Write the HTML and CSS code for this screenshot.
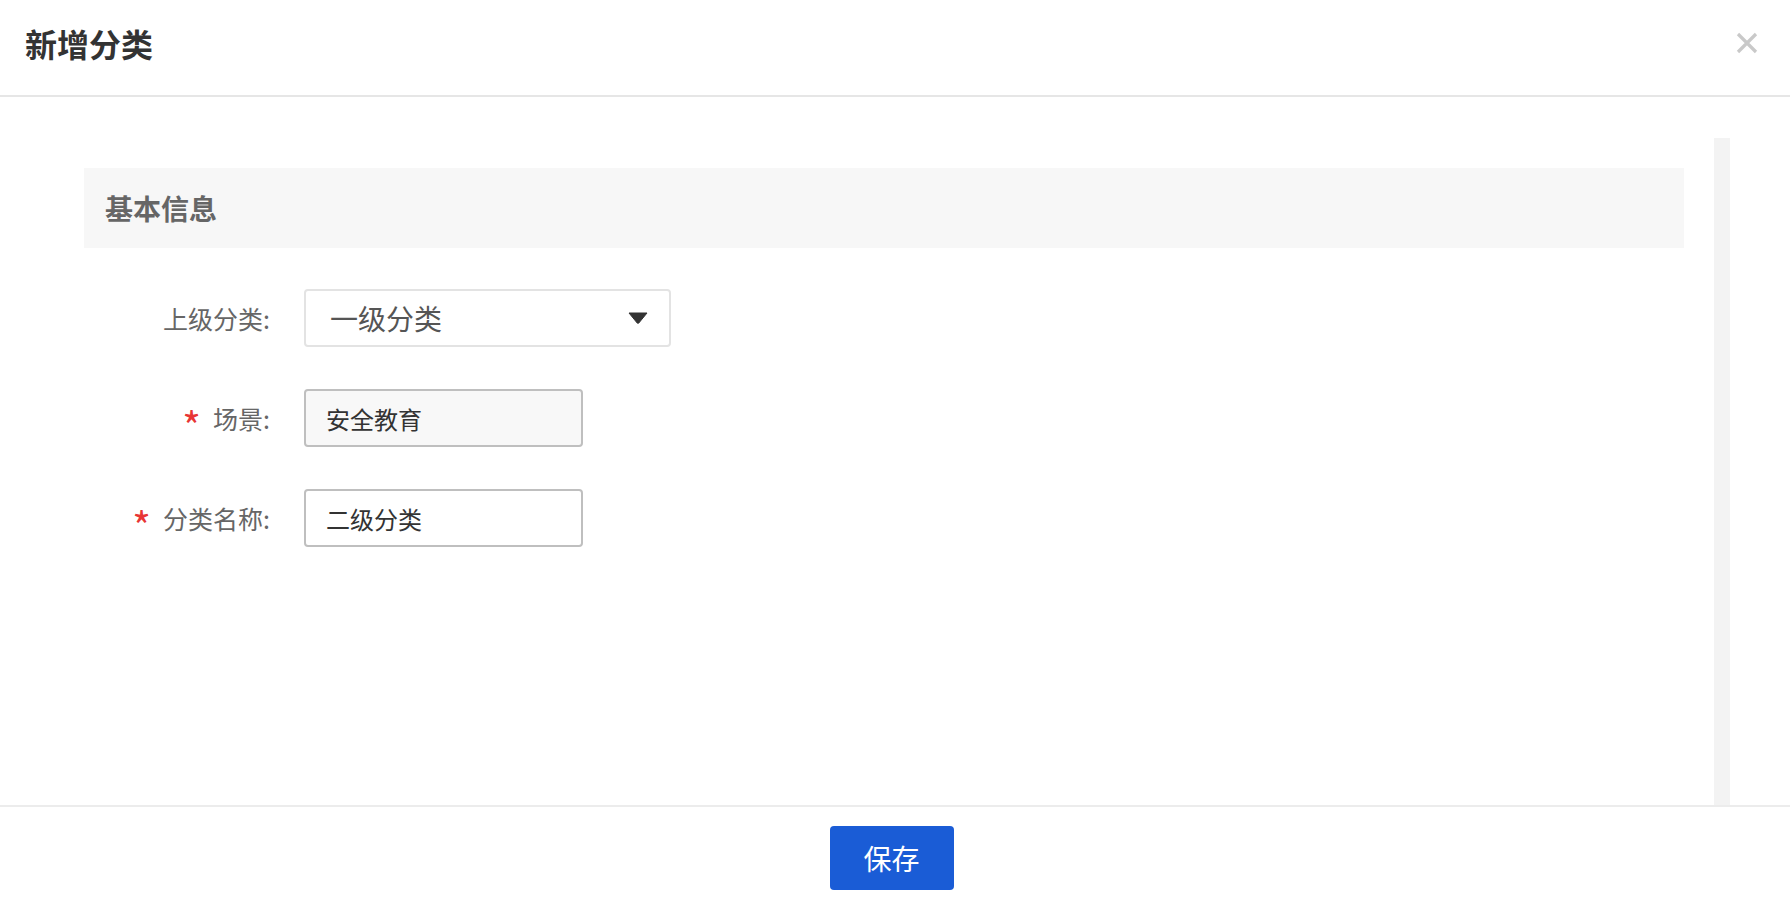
FILE: index.html
```html
<!DOCTYPE html>
<html lang="zh-CN">
<head>
    <meta charset="UTF-8">
    <meta name="viewport" content="width=device-width, initial-scale=1.0">
    <title>新增分类</title>
    <link rel="stylesheet" href="styles.css">
</head>
<body>
    <div class="dialog">
        <div class="dialog-header">
            <h1 class="dialog-title">新增分类</h1>
            <button class="close-btn" type="button" aria-label="关闭">
                <svg width="22" height="22" viewBox="0 0 22 22">
                    <path d="M2 2 L20 20 M20 2 L2 20" stroke="#c9c9c9" stroke-width="3.2" fill="none"/>
                </svg>
            </button>
        </div>

        <div class="dialog-body">
            <div class="scroll-area">
                <div class="scroll-content">
                    <div class="section-title">基本信息</div>

                    <form class="form">
                        <div class="form-row">
                            <label class="form-label">上级分类:</label>
                            <div class="select">
                                <span class="select-value">一级分类</span>
                                <svg class="select-arrow" width="20" height="12" viewBox="0 0 20 12">
                                    <path d="M1 1 L19 1 L10.8 11 Q10 11.8 9.2 11 Z" fill="#333" stroke="#333" stroke-width="1" stroke-linejoin="round"/>
                                </svg>
                            </div>
                        </div>

                        <div class="form-row">
                            <label class="form-label" for="scene"><span class="required">*</span>场景:</label>
                            <input class="form-input is-disabled" type="text" id="scene" value="安全教育" readonly>
                        </div>

                        <div class="form-row">
                            <label class="form-label" for="cat-name"><span class="required">*</span>分类名称:</label>
                            <input class="form-input" type="text" id="cat-name" value="二级分类">
                        </div>
                    </form>
                </div>
                <div class="scroll-track"></div>
            </div>
        </div>

        <div class="dialog-footer">
            <button class="btn-primary" type="button">保存</button>
        </div>
    </div>
</body>
</html>
```

FILE: styles.css
```css
* {
    box-sizing: border-box;
}
body {
    margin: 0;
    font-family: "Noto Sans CJK SC", "Noto Sans", sans-serif;
    color: #333;
    background: #fff;
}
.dialog {
    height: 100vh;
    display: flex;
    flex-direction: column;
}
.dialog-header {
    height: 97px;
    padding: 0 32px 10px 25px;
    border-bottom: 2px solid #e6e6e6;
    display: flex;
    align-items: center;
    justify-content: space-between;
}
.dialog-title {
    margin: 0;
    font-size: 32px;
    line-height: 32px;
    font-weight: bold;
    color: #333;
}
.close-btn {
    padding: 0;
    border: none;
    background: none;
    cursor: pointer;
    display: flex;
}
.dialog-body {
    flex: 1;
    min-height: 0;
    padding: 41px 60px 0 54px;
}
.scroll-area {
    height: 100%;
    display: flex;
}
.scroll-content {
    flex: 1;
    padding: 30px;
}
.scroll-track {
    width: 16px;
    background: #f3f3f3;
}
.section-title {
    height: 80px;
    padding-left: 21px;
    background: #f7f7f7;
    display: flex;
    align-items: center;
    font-size: 28px;
    font-weight: bold;
    color: #666;
}
.form-row {
    display: flex;
    align-items: center;
    margin-top: 41px;
}
.form-row + .form-row {
    margin-top: 42px;
}
.form-label {
    width: 186px;
    margin-right: 34px;
    text-align: right;
    font-size: 25px;
    line-height: 25px;
    color: #666;
}
.required {
    color: #e83535;
    font-size: 40px;
    line-height: 0;
    margin-right: 12px;
    vertical-align: -13px;
}
.select {
    width: 367px;
    height: 58px;
    padding: 0 21px 0 24px;
    border: 2px solid #e3e3e3;
    border-radius: 4px;
    display: flex;
    align-items: center;
    justify-content: space-between;
}
.select-value {
    font-size: 28px;
    color: #555;
}
.form-input {
    width: 279px;
    height: 58px;
    padding: 0 20px;
    border: 2px solid #bfbfbf;
    border-radius: 4px;
    font-family: inherit;
    font-size: 24px;
    color: #333;
    background: #fff;
    outline: none;
}
.form-input.is-disabled {
    background: #f8f8f8;
}
.dialog-footer {
    height: 103px;
    padding: 19px 7px 0 0;
    border-top: 2px solid #ececec;
    display: flex;
    justify-content: center;
    align-items: flex-start;
}
.btn-primary {
    width: 124px;
    height: 64px;
    border: none;
    border-radius: 4px;
    background: #1a5cd6;
    color: #fff;
    font-family: inherit;
    font-size: 28px;
    cursor: pointer;
}
```
